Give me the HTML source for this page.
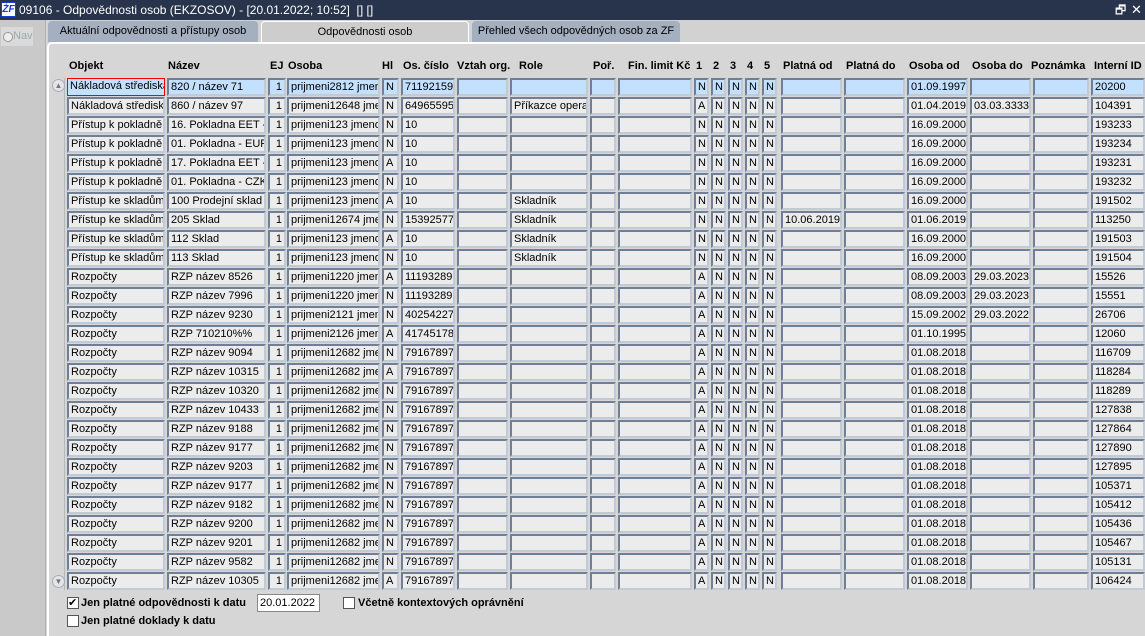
<!DOCTYPE html><html><head><meta charset="utf-8"><style>
*{box-sizing:border-box;margin:0;padding:0}
body{width:1145px;height:636px;overflow:hidden;background:#d6d6d6;font-family:"Liberation Sans",sans-serif;font-size:11px;color:#000;position:relative}
.tb{position:absolute;left:0;top:0;width:1145px;height:20px;background:#27344c;color:#fff;font-size:12px;line-height:20px}
.tb .ic{position:absolute;left:1px;top:2px;width:15px;height:15px;background:#fff;border:1px solid #1a3bd6;color:#1a3bd6;font:bold italic 10px/13px "Liberation Sans",sans-serif;text-align:center}
.left{position:absolute;left:0;top:20px;width:46px;height:616px;background:#c9c9c9;border-right:1px solid #b0b0b0}
.nav{position:absolute;left:1px;top:7px;width:32px;height:19px;background:#dadada;color:#9aa;font-size:11px;line-height:19px;padding-left:12px}
.nav:before{content:"";position:absolute;left:2px;top:5px;width:8px;height:8px;border-radius:50%;border:1px solid #999;background:#eee}
.strip{position:absolute;left:47px;top:20px;width:1098px;height:22px;background:#d2d2d2}
.tab{position:absolute;top:21px;height:21px;line-height:21px;font-size:11px;text-align:center;border-radius:4px 4px 0 0}
.tab.in{background:#a4afc0;color:#000}
.tab.ac{background:#cdcdcd;border:1px solid #fff;border-bottom:none}
.panel{position:absolute;left:47px;top:42px;width:1098px;height:594px;background:#d6d6d6;border-top:2px solid #fff;border-left:2px solid #fff;border-radius:5px 0 0 0}
.h{position:absolute;top:60px;font-weight:bold;font-size:11px}
.r{position:absolute;left:0;width:1145px;height:18px}
.r div{position:absolute;top:0;height:18px;background:#ececec;border:2px solid;border-color:#6f7f96 #c2cad6 #c2cad6 #6f7f96;line-height:14px;padding-left:2px;white-space:nowrap;overflow:hidden}
.r.s div{background:#c3e0fe}
.r .n{text-align:right;padding-right:2px}
.a1{left:67px;width:98px}.a2{left:167px;width:99px}.a3{left:268px;width:18px}.a4{left:287px;width:93px}.a5{left:382px;width:17px}.a6{left:401px;width:54px}.a7{left:457px;width:51px}.a8{left:510px;width:78px}.a9{left:590px;width:26px}.a10{left:618px;width:74px}.b1{left:694px;width:15px}.b2{left:711px;width:15px}.b3{left:728px;width:15px}.b4{left:745px;width:15px}.b5{left:762px;width:15px}.a11{left:781px;width:61px}.a12{left:844px;width:61px}.a13{left:907px;width:61px}.a14{left:970px;width:61px}.a15{left:1033px;width:56px}.a16{left:1091px;width:54px}
.sb{position:absolute;left:51px;top:78px;width:14px;height:512px;border-right:1px solid #b8b8b8}
.arr{position:absolute;left:52px;width:13px;height:13px;border-radius:50%;background:#e4e4e4;border:1px solid #aab}
.cb{position:absolute;width:12px;height:12px;background:#fff;border:1px solid #555;font-size:11px;line-height:10px}
.lb{position:absolute;font-weight:bold;font-size:11px}
</style></head><body>
<div class="tb"><div class="ic">ŻF</div><span style="position:absolute;left:19px">09106 - Odpovědnosti osob (EKZOSOV) - [20.01.2022; 10:52]&nbsp; [] []</span><span style="position:absolute;left:1115px;font-size:12px">🗗</span><span style="position:absolute;left:1131px;font-size:13px">✕</span></div>
<div class="left"><div class="nav">Nav</div></div>
<div class="strip"></div>
<div class="tab in" style="left:48px;width:210px">Aktuální odpovědnosti a přístupy osob</div>
<div class="tab ac" style="left:261px;width:208px">Odpovědnosti osob</div>
<div class="tab in" style="left:472px;width:208px">Přehled všech odpovědných osob za ZF</div>
<div class="panel"></div>
<div class="h" style="left:69px">Objekt</div><div class="h" style="left:168px">Název</div><div class="h" style="left:270px">EJ</div><div class="h" style="left:288px">Osoba</div><div class="h" style="left:382px">Hl</div><div class="h" style="left:403px">Os. číslo</div><div class="h" style="left:457px">Vztah org.</div><div class="h" style="left:519px">Role</div><div class="h" style="left:593px">Poř.</div><div class="h" style="left:628px">Fin. limit Kč</div><div class="h" style="left:696px">1</div><div class="h" style="left:713px">2</div><div class="h" style="left:730px">3</div><div class="h" style="left:747px">4</div><div class="h" style="left:764px">5</div><div class="h" style="left:783px">Platná od</div><div class="h" style="left:846px">Platná do</div><div class="h" style="left:909px">Osoba od</div><div class="h" style="left:972px">Osoba do</div><div class="h" style="left:1031px">Poznámka</div><div class="h" style="left:1094px">Interní ID</div>
<div class="sb"></div>
<div class="arr" style="top:79px;font-size:8px;text-align:center;line-height:11px;color:#678">▲</div>
<div class="arr" style="top:575px;font-size:8px;text-align:center;line-height:11px;color:#678">▼</div>

<div class="r s" style="top:78px"><div class="a1" style="border:1px solid #e00">Nákladová střediska</div><div class="a2">820 / název 71</div><div class="a3 n">1</div><div class="a4">prijmeni2812 jmeno</div><div class="a5">N</div><div class="a6">71192159</div><div class="a7"></div><div class="a8"></div><div class="a9"></div><div class="a10"></div><div class="b1">N</div><div class="b2">N</div><div class="b3">N</div><div class="b4">N</div><div class="b5">N</div><div class="a11"></div><div class="a12"></div><div class="a13">01.09.1997</div><div class="a14"></div><div class="a15"></div><div class="a16">20200</div></div>
<div class="r" style="top:97px"><div class="a1">Nákladová střediska</div><div class="a2">860 / název 97</div><div class="a3 n">1</div><div class="a4">prijmeni12648 jmeno</div><div class="a5">N</div><div class="a6">64965595</div><div class="a7"></div><div class="a8">Příkazce operace</div><div class="a9"></div><div class="a10"></div><div class="b1">A</div><div class="b2">N</div><div class="b3">N</div><div class="b4">N</div><div class="b5">N</div><div class="a11"></div><div class="a12"></div><div class="a13">01.04.2019</div><div class="a14">03.03.3333</div><div class="a15"></div><div class="a16">104391</div></div>
<div class="r" style="top:116px"><div class="a1">Přístup k pokladně</div><div class="a2">16. Pokladna EET - K</div><div class="a3 n">1</div><div class="a4">prijmeni123 jmeno1</div><div class="a5">N</div><div class="a6">10</div><div class="a7"></div><div class="a8"></div><div class="a9"></div><div class="a10"></div><div class="b1">N</div><div class="b2">N</div><div class="b3">N</div><div class="b4">N</div><div class="b5">N</div><div class="a11"></div><div class="a12"></div><div class="a13">16.09.2000</div><div class="a14"></div><div class="a15"></div><div class="a16">193233</div></div>
<div class="r" style="top:135px"><div class="a1">Přístup k pokladně</div><div class="a2">01. Pokladna - EUR</div><div class="a3 n">1</div><div class="a4">prijmeni123 jmeno1</div><div class="a5">N</div><div class="a6">10</div><div class="a7"></div><div class="a8"></div><div class="a9"></div><div class="a10"></div><div class="b1">N</div><div class="b2">N</div><div class="b3">N</div><div class="b4">N</div><div class="b5">N</div><div class="a11"></div><div class="a12"></div><div class="a13">16.09.2000</div><div class="a14"></div><div class="a15"></div><div class="a16">193234</div></div>
<div class="r" style="top:154px"><div class="a1">Přístup k pokladně</div><div class="a2">17. Pokladna EET - C</div><div class="a3 n">1</div><div class="a4">prijmeni123 jmeno1</div><div class="a5">A</div><div class="a6">10</div><div class="a7"></div><div class="a8"></div><div class="a9"></div><div class="a10"></div><div class="b1">N</div><div class="b2">N</div><div class="b3">N</div><div class="b4">N</div><div class="b5">N</div><div class="a11"></div><div class="a12"></div><div class="a13">16.09.2000</div><div class="a14"></div><div class="a15"></div><div class="a16">193231</div></div>
<div class="r" style="top:173px"><div class="a1">Přístup k pokladně</div><div class="a2">01. Pokladna - CZK</div><div class="a3 n">1</div><div class="a4">prijmeni123 jmeno1</div><div class="a5">N</div><div class="a6">10</div><div class="a7"></div><div class="a8"></div><div class="a9"></div><div class="a10"></div><div class="b1">N</div><div class="b2">N</div><div class="b3">N</div><div class="b4">N</div><div class="b5">N</div><div class="a11"></div><div class="a12"></div><div class="a13">16.09.2000</div><div class="a14"></div><div class="a15"></div><div class="a16">193232</div></div>
<div class="r" style="top:192px"><div class="a1">Přístup ke skladům</div><div class="a2">100 Prodejní sklad</div><div class="a3 n">1</div><div class="a4">prijmeni123 jmeno1</div><div class="a5">A</div><div class="a6">10</div><div class="a7"></div><div class="a8">Skladník</div><div class="a9"></div><div class="a10"></div><div class="b1">N</div><div class="b2">N</div><div class="b3">N</div><div class="b4">N</div><div class="b5">N</div><div class="a11"></div><div class="a12"></div><div class="a13">16.09.2000</div><div class="a14"></div><div class="a15"></div><div class="a16">191502</div></div>
<div class="r" style="top:211px"><div class="a1">Přístup ke skladům</div><div class="a2">205 Sklad</div><div class="a3 n">1</div><div class="a4">prijmeni12674 jmeno</div><div class="a5">N</div><div class="a6">15392577</div><div class="a7"></div><div class="a8">Skladník</div><div class="a9"></div><div class="a10"></div><div class="b1">N</div><div class="b2">N</div><div class="b3">N</div><div class="b4">N</div><div class="b5">N</div><div class="a11">10.06.2019</div><div class="a12"></div><div class="a13">01.06.2019</div><div class="a14"></div><div class="a15"></div><div class="a16">113250</div></div>
<div class="r" style="top:230px"><div class="a1">Přístup ke skladům</div><div class="a2">112 Sklad</div><div class="a3 n">1</div><div class="a4">prijmeni123 jmeno1</div><div class="a5">A</div><div class="a6">10</div><div class="a7"></div><div class="a8">Skladník</div><div class="a9"></div><div class="a10"></div><div class="b1">N</div><div class="b2">N</div><div class="b3">N</div><div class="b4">N</div><div class="b5">N</div><div class="a11"></div><div class="a12"></div><div class="a13">16.09.2000</div><div class="a14"></div><div class="a15"></div><div class="a16">191503</div></div>
<div class="r" style="top:249px"><div class="a1">Přístup ke skladům</div><div class="a2">113 Sklad</div><div class="a3 n">1</div><div class="a4">prijmeni123 jmeno1</div><div class="a5">N</div><div class="a6">10</div><div class="a7"></div><div class="a8">Skladník</div><div class="a9"></div><div class="a10"></div><div class="b1">N</div><div class="b2">N</div><div class="b3">N</div><div class="b4">N</div><div class="b5">N</div><div class="a11"></div><div class="a12"></div><div class="a13">16.09.2000</div><div class="a14"></div><div class="a15"></div><div class="a16">191504</div></div>
<div class="r" style="top:268px"><div class="a1">Rozpočty</div><div class="a2">RZP název 8526</div><div class="a3 n">1</div><div class="a4">prijmeni1220 jmeno</div><div class="a5">A</div><div class="a6">11193289</div><div class="a7"></div><div class="a8"></div><div class="a9"></div><div class="a10"></div><div class="b1">A</div><div class="b2">N</div><div class="b3">N</div><div class="b4">N</div><div class="b5">N</div><div class="a11"></div><div class="a12"></div><div class="a13">08.09.2003</div><div class="a14">29.03.2023</div><div class="a15"></div><div class="a16">15526</div></div>
<div class="r" style="top:287px"><div class="a1">Rozpočty</div><div class="a2">RZP název 7996</div><div class="a3 n">1</div><div class="a4">prijmeni1220 jmeno</div><div class="a5">N</div><div class="a6">11193289</div><div class="a7"></div><div class="a8"></div><div class="a9"></div><div class="a10"></div><div class="b1">A</div><div class="b2">N</div><div class="b3">N</div><div class="b4">N</div><div class="b5">N</div><div class="a11"></div><div class="a12"></div><div class="a13">08.09.2003</div><div class="a14">29.03.2023</div><div class="a15"></div><div class="a16">15551</div></div>
<div class="r" style="top:306px"><div class="a1">Rozpočty</div><div class="a2">RZP název 9230</div><div class="a3 n">1</div><div class="a4">prijmeni2121 jmeno</div><div class="a5">N</div><div class="a6">40254227</div><div class="a7"></div><div class="a8"></div><div class="a9"></div><div class="a10"></div><div class="b1">A</div><div class="b2">N</div><div class="b3">N</div><div class="b4">N</div><div class="b5">N</div><div class="a11"></div><div class="a12"></div><div class="a13">15.09.2002</div><div class="a14">29.03.2022</div><div class="a15"></div><div class="a16">26706</div></div>
<div class="r" style="top:325px"><div class="a1">Rozpočty</div><div class="a2">RZP 710210%%</div><div class="a3 n">1</div><div class="a4">prijmeni2126 jmeno</div><div class="a5">A</div><div class="a6">41745178</div><div class="a7"></div><div class="a8"></div><div class="a9"></div><div class="a10"></div><div class="b1">A</div><div class="b2">N</div><div class="b3">N</div><div class="b4">N</div><div class="b5">N</div><div class="a11"></div><div class="a12"></div><div class="a13">01.10.1995</div><div class="a14"></div><div class="a15"></div><div class="a16">12060</div></div>
<div class="r" style="top:344px"><div class="a1">Rozpočty</div><div class="a2">RZP název 9094</div><div class="a3 n">1</div><div class="a4">prijmeni12682 jmen</div><div class="a5">N</div><div class="a6">79167897</div><div class="a7"></div><div class="a8"></div><div class="a9"></div><div class="a10"></div><div class="b1">A</div><div class="b2">N</div><div class="b3">N</div><div class="b4">N</div><div class="b5">N</div><div class="a11"></div><div class="a12"></div><div class="a13">01.08.2018</div><div class="a14"></div><div class="a15"></div><div class="a16">116709</div></div>
<div class="r" style="top:363px"><div class="a1">Rozpočty</div><div class="a2">RZP název 10315</div><div class="a3 n">1</div><div class="a4">prijmeni12682 jmen</div><div class="a5">A</div><div class="a6">79167897</div><div class="a7"></div><div class="a8"></div><div class="a9"></div><div class="a10"></div><div class="b1">A</div><div class="b2">N</div><div class="b3">N</div><div class="b4">N</div><div class="b5">N</div><div class="a11"></div><div class="a12"></div><div class="a13">01.08.2018</div><div class="a14"></div><div class="a15"></div><div class="a16">118284</div></div>
<div class="r" style="top:382px"><div class="a1">Rozpočty</div><div class="a2">RZP název 10320</div><div class="a3 n">1</div><div class="a4">prijmeni12682 jmen</div><div class="a5">N</div><div class="a6">79167897</div><div class="a7"></div><div class="a8"></div><div class="a9"></div><div class="a10"></div><div class="b1">A</div><div class="b2">N</div><div class="b3">N</div><div class="b4">N</div><div class="b5">N</div><div class="a11"></div><div class="a12"></div><div class="a13">01.08.2018</div><div class="a14"></div><div class="a15"></div><div class="a16">118289</div></div>
<div class="r" style="top:401px"><div class="a1">Rozpočty</div><div class="a2">RZP název 10433</div><div class="a3 n">1</div><div class="a4">prijmeni12682 jmen</div><div class="a5">N</div><div class="a6">79167897</div><div class="a7"></div><div class="a8"></div><div class="a9"></div><div class="a10"></div><div class="b1">A</div><div class="b2">N</div><div class="b3">N</div><div class="b4">N</div><div class="b5">N</div><div class="a11"></div><div class="a12"></div><div class="a13">01.08.2018</div><div class="a14"></div><div class="a15"></div><div class="a16">127838</div></div>
<div class="r" style="top:420px"><div class="a1">Rozpočty</div><div class="a2">RZP název 9188</div><div class="a3 n">1</div><div class="a4">prijmeni12682 jmen</div><div class="a5">N</div><div class="a6">79167897</div><div class="a7"></div><div class="a8"></div><div class="a9"></div><div class="a10"></div><div class="b1">A</div><div class="b2">N</div><div class="b3">N</div><div class="b4">N</div><div class="b5">N</div><div class="a11"></div><div class="a12"></div><div class="a13">01.08.2018</div><div class="a14"></div><div class="a15"></div><div class="a16">127864</div></div>
<div class="r" style="top:439px"><div class="a1">Rozpočty</div><div class="a2">RZP název 9177</div><div class="a3 n">1</div><div class="a4">prijmeni12682 jmen</div><div class="a5">N</div><div class="a6">79167897</div><div class="a7"></div><div class="a8"></div><div class="a9"></div><div class="a10"></div><div class="b1">A</div><div class="b2">N</div><div class="b3">N</div><div class="b4">N</div><div class="b5">N</div><div class="a11"></div><div class="a12"></div><div class="a13">01.08.2018</div><div class="a14"></div><div class="a15"></div><div class="a16">127890</div></div>
<div class="r" style="top:458px"><div class="a1">Rozpočty</div><div class="a2">RZP název 9203</div><div class="a3 n">1</div><div class="a4">prijmeni12682 jmen</div><div class="a5">N</div><div class="a6">79167897</div><div class="a7"></div><div class="a8"></div><div class="a9"></div><div class="a10"></div><div class="b1">A</div><div class="b2">N</div><div class="b3">N</div><div class="b4">N</div><div class="b5">N</div><div class="a11"></div><div class="a12"></div><div class="a13">01.08.2018</div><div class="a14"></div><div class="a15"></div><div class="a16">127895</div></div>
<div class="r" style="top:477px"><div class="a1">Rozpočty</div><div class="a2">RZP název 9177</div><div class="a3 n">1</div><div class="a4">prijmeni12682 jmen</div><div class="a5">N</div><div class="a6">79167897</div><div class="a7"></div><div class="a8"></div><div class="a9"></div><div class="a10"></div><div class="b1">A</div><div class="b2">N</div><div class="b3">N</div><div class="b4">N</div><div class="b5">N</div><div class="a11"></div><div class="a12"></div><div class="a13">01.08.2018</div><div class="a14"></div><div class="a15"></div><div class="a16">105371</div></div>
<div class="r" style="top:496px"><div class="a1">Rozpočty</div><div class="a2">RZP název 9182</div><div class="a3 n">1</div><div class="a4">prijmeni12682 jmen</div><div class="a5">N</div><div class="a6">79167897</div><div class="a7"></div><div class="a8"></div><div class="a9"></div><div class="a10"></div><div class="b1">A</div><div class="b2">N</div><div class="b3">N</div><div class="b4">N</div><div class="b5">N</div><div class="a11"></div><div class="a12"></div><div class="a13">01.08.2018</div><div class="a14"></div><div class="a15"></div><div class="a16">105412</div></div>
<div class="r" style="top:515px"><div class="a1">Rozpočty</div><div class="a2">RZP název 9200</div><div class="a3 n">1</div><div class="a4">prijmeni12682 jmen</div><div class="a5">N</div><div class="a6">79167897</div><div class="a7"></div><div class="a8"></div><div class="a9"></div><div class="a10"></div><div class="b1">A</div><div class="b2">N</div><div class="b3">N</div><div class="b4">N</div><div class="b5">N</div><div class="a11"></div><div class="a12"></div><div class="a13">01.08.2018</div><div class="a14"></div><div class="a15"></div><div class="a16">105436</div></div>
<div class="r" style="top:534px"><div class="a1">Rozpočty</div><div class="a2">RZP název 9201</div><div class="a3 n">1</div><div class="a4">prijmeni12682 jmen</div><div class="a5">N</div><div class="a6">79167897</div><div class="a7"></div><div class="a8"></div><div class="a9"></div><div class="a10"></div><div class="b1">A</div><div class="b2">N</div><div class="b3">N</div><div class="b4">N</div><div class="b5">N</div><div class="a11"></div><div class="a12"></div><div class="a13">01.08.2018</div><div class="a14"></div><div class="a15"></div><div class="a16">105467</div></div>
<div class="r" style="top:553px"><div class="a1">Rozpočty</div><div class="a2">RZP název 9582</div><div class="a3 n">1</div><div class="a4">prijmeni12682 jmen</div><div class="a5">N</div><div class="a6">79167897</div><div class="a7"></div><div class="a8"></div><div class="a9"></div><div class="a10"></div><div class="b1">A</div><div class="b2">N</div><div class="b3">N</div><div class="b4">N</div><div class="b5">N</div><div class="a11"></div><div class="a12"></div><div class="a13">01.08.2018</div><div class="a14"></div><div class="a15"></div><div class="a16">105131</div></div>
<div class="r" style="top:572px"><div class="a1">Rozpočty</div><div class="a2">RZP název 10305</div><div class="a3 n">1</div><div class="a4">prijmeni12682 jmen</div><div class="a5">A</div><div class="a6">79167897</div><div class="a7"></div><div class="a8"></div><div class="a9"></div><div class="a10"></div><div class="b1">A</div><div class="b2">N</div><div class="b3">N</div><div class="b4">N</div><div class="b5">N</div><div class="a11"></div><div class="a12"></div><div class="a13">01.08.2018</div><div class="a14"></div><div class="a15"></div><div class="a16">106424</div></div>

<div class="cb" style="left:67px;top:597px">✔</div><div class="lb" style="left:81px;top:597px">Jen platné odpovědnosti k datu</div>
<div style="position:absolute;left:257px;top:594px;width:63px;height:18px;background:#fff;border:1px solid #888;line-height:16px;padding-left:2px">20.01.2022</div>
<div class="cb" style="left:343px;top:597px"></div><div class="lb" style="left:358px;top:597px">Včetně kontextových oprávnění</div>
<div class="cb" style="left:67px;top:615px"></div><div class="lb" style="left:81px;top:615px">Jen platné doklady k datu</div>
</body></html>
